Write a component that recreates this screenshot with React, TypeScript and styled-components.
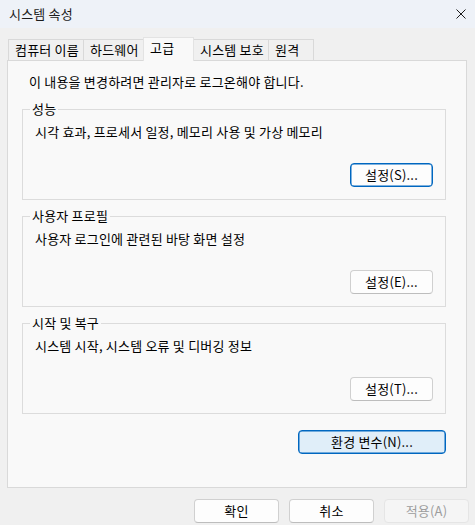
import * as React from "react";
import styled, { createGlobalStyle, css } from "styled-components";

const GlobalStyle = createGlobalStyle`
  html, body {
    margin: 0;
    padding: 0;
    background: #f0f0f0;
  }
  body {
    font-family: "Noto Sans CJK KR", "Noto Sans", sans-serif;
    font-size: 13px;
    line-height: 16px;
    letter-spacing: 0.2px;
    color: #000;
  }
`;

const Window = styled.div`
  width: 475px;
  height: 525px;
  display: flex;
  flex-direction: column;
  background: #f0f0f0;
  overflow: hidden;
`;

const TitleBar = styled.header`
  height: 28px;
  display: flex;
  align-items: center;
  justify-content: space-between;
  padding: 0 9px 0 9px;
  background: #eef2f8;
`;

const Title = styled.span`
  font-size: 13px;
  color: #1b1b1b;
`;

const CloseGlyph = styled.span`
  display: flex;
  width: 10px;
  height: 10px;
  margin-top: -1px;
`;

const TabList = styled.div`
  display: flex;
  align-items: flex-end;
  height: 23px;
  margin-top: 9px;
  padding-left: 8px;
`;

const Tab = styled.div<{ $width: number; $active?: boolean }>`
  box-sizing: border-box;
  width: ${(p) => p.$width}px;
  height: 21px;
  padding: 2px 0 0 6px;
  background: #f0f0f0;
  border: 1px solid #d9d9d9;
  border-bottom: none;
  margin-left: -1px;
  white-space: nowrap;

  &:first-child {
    margin-left: 0;
  }

  ${(p) =>
    p.$active &&
    css`
      position: relative;
      z-index: 1;
      height: 24px;
      margin-bottom: -1px;
      padding: 2px 0 0 6px;
      background: #f9f9f9;
      border-color: #e3e3e3;
    `}
`;

const Panel = styled.section`
  box-sizing: border-box;
  height: 428px;
  margin: 0 8px 0 7px;
  padding: 13px 20px 0 14px;
  background: #f9f9f9;
  border: 1px solid #d9d9d9;
  display: flex;
  flex-direction: column;
`;

const Notice = styled.p`
  margin: 0 0 11px 7px;
`;

const GroupBox = styled.fieldset`
  margin: 0 0 8px 0;
  padding: 7px 0 12px 0;
  border: 1px solid #dcdcdc;
  min-width: 0;
`;

const Legend = styled.legend`
  margin-left: 7px;
  padding: 0 2px;
  line-height: 16px;
`;

const GroupBody = styled.div`
  display: flex;
  flex-direction: column;
  padding: 0 12px;
`;

const Description = styled.p`
  margin: 0 0 23px 0;
`;

const Button = styled.button<{
  $width: number;
  $variant?: "normal" | "focused" | "accent" | "disabled";
}>`
  box-sizing: border-box;
  width: ${(p) => p.$width}px;
  height: 24px;
  padding: 0;
  font-family: inherit;
  font-size: 13px;
  line-height: 16px;
  letter-spacing: inherit;
  color: #000;
  background: #fdfdfd;
  border: 1px solid #d0d0d0;
  border-bottom-color: #bdbdbd;
  border-radius: 4px;

  ${(p) =>
    p.$variant === "focused" &&
    css`
      border: 1px solid #0067c0;
      box-shadow: inset 0 0 0 0.5px #0067c0;
    `}

  ${(p) =>
    p.$variant === "accent" &&
    css`
      background: #e0eef9;
      border: 1px solid #0067c0;
      box-shadow: inset 0 0 0 0.5px #0067c0;
    `}

  ${(p) =>
    p.$variant === "disabled" &&
    css`
      background: #f5f5f5;
      border-color: #e5e5e5;
      color: #9d9d9d;
    `}
`;

const ButtonRow = styled.div`
  display: flex;
  justify-content: flex-end;
`;

const EnvRow = styled.div`
  display: flex;
  justify-content: flex-end;
  margin-top: 8px;
`;

const Footer = styled.footer`
  display: flex;
  justify-content: flex-end;
  gap: 10px;
  margin-top: 11px;
  padding-right: 6px;
`;

interface GroupProps {
  legend: string;
  description: string;
  button: string;
  focused?: boolean;
}

const Group: React.FunctionComponent<GroupProps> = (props) => (
  <GroupBox>
    <Legend>{props.legend}</Legend>
    <GroupBody>
      <Description>{props.description}</Description>
      <ButtonRow>
        <Button $width={83} $variant={props.focused ? "focused" : "normal"}>
          {props.button}
        </Button>
      </ButtonRow>
    </GroupBody>
  </GroupBox>
);

const tabs = [
  { label: "컴퓨터 이름", width: 76 },
  { label: "하드웨어", width: 61 },
  { label: "고급", width: 51, active: true },
  { label: "시스템 보호", width: 76 },
  { label: "원격", width: 46 },
];

const App: React.FunctionComponent = () => {
  return (
    <>
      <GlobalStyle />
      <Window>
        <TitleBar>
          <Title>시스템 속성</Title>
          <CloseGlyph>
            <svg width="10" height="10" viewBox="0 0 10 10">
              <path
                d="M0.5 0.5 L9.5 9.5 M9.5 0.5 L0.5 9.5"
                stroke="#1b1b1b"
                strokeWidth="1"
                fill="none"
              />
            </svg>
          </CloseGlyph>
        </TitleBar>
        <TabList>
          {tabs.map((t) => (
            <Tab key={t.label} $width={t.width} $active={t.active}>
              {t.label}
            </Tab>
          ))}
        </TabList>
        <Panel>
          <Notice>이 내용을 변경하려면 관리자로 로그온해야 합니다.</Notice>
          <Group
            legend="성능"
            description="시각 효과, 프로세서 일정, 메모리 사용 및 가상 메모리"
            button="설정(S)..."
            focused
          />
          <Group
            legend="사용자 프로필"
            description="사용자 로그인에 관련된 바탕 화면 설정"
            button="설정(E)..."
          />
          <Group
            legend="시작 및 복구"
            description="시스템 시작, 시스템 오류 및 디버깅 정보"
            button="설정(T)..."
          />
          <EnvRow>
            <Button $width={148} $variant="accent">
              환경 변수(N)...
            </Button>
          </EnvRow>
        </Panel>
        <Footer>
          <Button $width={85}>확인</Button>
          <Button $width={85}>취소</Button>
          <Button $width={85} $variant="disabled">
            적용(A)
          </Button>
        </Footer>
      </Window>
    </>
  );
};

export default App;
